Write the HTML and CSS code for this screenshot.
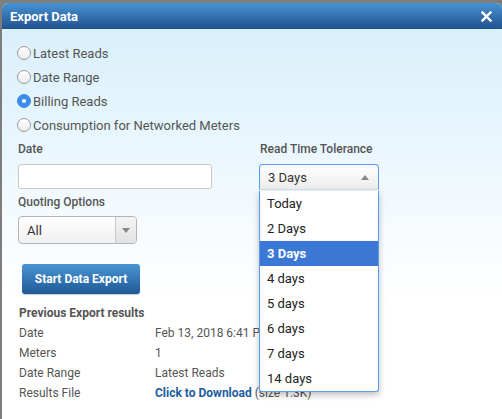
FILE: index.html
```html
<!DOCTYPE html>
<html>
<head>
<meta charset="utf-8">
<link rel="stylesheet" href="styles.css">
</head>
<body>
<div class="dialog">
  <div class="titlebar">
    <span class="title">Export Data</span>
    <svg class="close" width="11" height="11" viewBox="0 0 11 11"><path d="M1.5 1.5L9.5 9.5M9.5 1.5L1.5 9.5" stroke="#fff" stroke-width="2.4" stroke-linecap="square"/></svg>
  </div>
  <div class="content">
    <div class="radios">
      <label class="radio"><span class="dot"></span>Latest Reads</label>
      <label class="radio"><span class="dot"></span>Date Range</label>
      <label class="radio"><span class="dot on"></span>Billing Reads</label>
      <label class="radio"><span class="dot"></span>Consumption for Networked Meters</label>
    </div>
    <div class="grid">
      <div class="col-left">
        <div class="label">Date</div>
        <div class="input"></div>
        <div class="label label-q">Quoting Options</div>
        <div class="select">
          <span class="sel-text">All</span>
          <span class="sel-arrow"><svg width="8" height="5" viewBox="0 0 8 5"><path d="M0 0H8L4 5Z" fill="#888"/></svg></span>
        </div>
      </div>
      <div class="col-right">
        <div class="label">Read Time Tolerance</div>
        <div class="combo">
          <div class="combo-head">
            <span>3 Days</span>
            <svg width="8" height="5" viewBox="0 0 8 5"><path d="M0 5H8L4 0Z" fill="#888"/></svg>
          </div>
          <ul class="menu">
            <li>Today</li>
            <li>2 Days</li>
            <li class="sel">3 Days</li>
            <li>4 days</li>
            <li>5 days</li>
            <li>6 days</li>
            <li>7 days</li>
            <li>14 days</li>
          </ul>
        </div>
      </div>
    </div>
    <button class="btn">Start Data Export</button>
    <div class="results">
      <div class="res-title">Previous Export results</div>
      <div class="row"><span class="k">Date</span><span class="v">Feb 13, 2018 6:41 PM</span></div>
      <div class="row"><span class="k">Meters</span><span class="v">1</span></div>
      <div class="row"><span class="k">Date Range</span><span class="v">Latest Reads</span></div>
      <div class="row"><span class="k">Results File</span><span class="v"><a class="dl">Click to Download</a> (size 1.3K)</span></div>
    </div>
  </div>
</div>
</body>
</html>
```
FILE: styles.css
```css
html, body {
  margin: 0;
  padding: 0;
}
body {
  width: 502px;
  height: 419px;
  overflow: hidden;
  background: #7d7d7d;
  font-family: Roboto, "Liberation Sans", sans-serif;
}
.dialog {
  margin: 3px 0 0 2px;
  height: 416px;
  border-radius: 6px 6px 0 0;
  overflow: hidden;
  background: linear-gradient(to bottom, #d6eefa 0px, #e6f5fd 120px, #f6fbfe 220px, #ffffff 300px);
}
.titlebar {
  height: 26px;
  background: linear-gradient(to bottom, #4793d2, #21518f);
  display: flex;
  align-items: center;
  justify-content: space-between;
  padding: 0 10px 0 8px;
}
.title {
  color: #fff;
  font-weight: bold;
  font-size: 13px;
}
.close {
  display: block;
}
.content {
  padding: 12px 0 0 15px;
  position: relative;
}
.radios {
  display: flex;
  flex-direction: column;
}
.radio {
  height: 24px;
  display: flex;
  align-items: center;
  gap: 2px;
  font-size: 13px;
  color: #555;
}
.dot {
  width: 12px;
  height: 12px;
  border-radius: 50%;
  border: 1px solid #9a9a9a;
  background: linear-gradient(#ffffff, #ececec);
  box-sizing: content-box;
  display: flex;
  align-items: center;
  justify-content: center;
}
.dot.on {
  border-color: #3a8de8;
  background: #3a8de8;
}
.dot.on::after {
  content: "";
  width: 4px;
  height: 4px;
  border-radius: 50%;
  background: #fff;
}
.grid {
  display: grid;
  grid-template-columns: 242px 120px;
  margin-top: 4px;
}
.col-left, .col-right {
  display: flex;
  flex-direction: column;
}
.col-left { padding-left: 1px; }
.label {
  height: 16px;
  line-height: 16px;
  font-size: 12px;
  font-weight: 500;
  color: #555;
}
.col-right .label { padding-left: 1px; }
.input {
  margin-top: 7px;
  width: 192px;
  height: 23px;
  border: 1px solid #c8c8c8;
  border-radius: 3px;
  background: #fff;
}
.label-q {
  margin-top: 5px;
}
.select {
  margin-top: 6px;
  width: 117px;
  height: 26px;
  border: 1px solid #b4b4b4;
  border-radius: 4px;
  background: linear-gradient(#ffffff, #f0f0f0);
  display: flex;
  align-items: center;
  justify-content: space-between;
  overflow: hidden;
}
.sel-text {
  font-size: 13px;
  color: #333;
  padding-left: 8px;
}
.sel-arrow {
  width: 20px;
  height: 100%;
  border-left: 1px solid #c8c8c8;
  background: linear-gradient(#f4f4f4, #e2e2e2);
  display: flex;
  align-items: center;
  justify-content: center;
}
.combo {
  margin-top: 7px;
  position: relative;
  width: 120px;
}
.combo-head {
  height: 24px;
  border: 1px solid #5b9be8;
  border-bottom: 1px solid #cfe0f4;
  border-radius: 4px 4px 0 0;
  background: linear-gradient(#ffffff, #ececec);
  display: flex;
  align-items: center;
  justify-content: space-between;
  padding: 0 9px 0 8px;
  font-size: 13px;
  color: #333;
}
.menu {
  position: absolute;
  top: 27px;
  left: 0;
  width: 118px;
  margin: 0;
  padding: 0;
  list-style: none;
  background: #fff;
  border: 1px solid #5b9be8;
  border-top: none;
  border-radius: 0 0 3px 3px;
  box-shadow: 0 3px 6px rgba(0, 0, 0, 0.25);
  z-index: 5;
}
.menu li {
  height: 25px;
  line-height: 26px;
  padding-left: 7px;
  font-size: 13px;
  color: #222;
}
.menu li.sel {
  background: #3b78d5;
  color: #fff;
  font-weight: bold;
}
.btn {
  display: block;
  margin: 20px 0 0 5px;
  width: 118px;
  height: 30px;
  border: none;
  border-radius: 3px;
  background: linear-gradient(#4a94d4, #1f5997);
  color: #fff;
  font-family: Roboto, "Liberation Sans", sans-serif;
  font-weight: bold;
  font-size: 12px;
  padding: 0;
  box-shadow: 0 1px 1px rgba(0,0,0,0.2);
}
.results {
  margin-top: 9px;
  padding-left: 2px;
  font-size: 12px;
  color: #555;
}
.res-title {
  height: 20px;
  line-height: 20px;
  font-weight: bold;
}
.row {
  display: flex;
  height: 20px;
  line-height: 20px;
}
.k {
  width: 136px;
}
.dl {
  color: #1d5c9f;
  font-weight: bold;
}
```
